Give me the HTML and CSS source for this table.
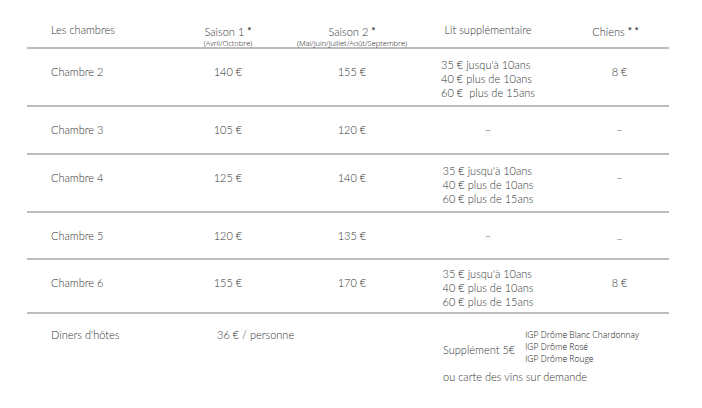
FILE: index.html
```html
<!DOCTYPE html>
<html lang="fr">
<head>
<meta charset="utf-8">
<title>Tarifs</title>
<link rel="stylesheet" href="styles.css">
</head>
<body>
<div class="table">
  <div class="row head">
    <div class="cell name">Les chambres</div>
    <div class="cell mid"><div>Saison 1 <span class="star">*</span></div><div class="sub">(Avril/Octobre)</div></div>
    <div class="cell mid"><div>Saison 2 <span class="star">*</span></div><div class="sub">(Mai/Juin/Juillet/Août/Septembre)</div></div>
    <div class="cell mid lit-h">Lit supplémentaire</div>
    <div class="cell mid dog">Chiens <span class="star">* *</span></div>
  </div>
  <div class="row tall">
    <div class="cell name">Chambre 2</div>
    <div class="cell mid">140 €</div>
    <div class="cell mid">155 €</div>
    <div class="cell mid lit"><div class="lit-list"><div>35 € jusqu'à 10ans</div><div>40 € plus de 10ans</div><div>60 €&nbsp; plus de 15ans</div></div></div>
    <div class="cell mid dog">8 €</div>
  </div>
  <div class="row short">
    <div class="cell name">Chambre 3</div>
    <div class="cell mid">105 €</div>
    <div class="cell mid">120 €</div>
    <div class="cell mid">–</div>
    <div class="cell mid dog">–</div>
  </div>
  <div class="row tall">
    <div class="cell name">Chambre 4</div>
    <div class="cell mid">125 €</div>
    <div class="cell mid">140 €</div>
    <div class="cell mid lit"><div class="lit-list"><div>35 € jusqu'à 10ans</div><div>40 € plus de 10ans</div><div>60 € plus de 15ans</div></div></div>
    <div class="cell mid dog">–</div>
  </div>
  <div class="row short5">
    <div class="cell name">Chambre 5</div>
    <div class="cell mid">120 €</div>
    <div class="cell mid">135 €</div>
    <div class="cell mid">–</div>
    <div class="cell mid dog low">_</div>
  </div>
  <div class="row mid6">
    <div class="cell name">Chambre 6</div>
    <div class="cell mid">155 €</div>
    <div class="cell mid">170 €</div>
    <div class="cell mid lit lit6"><div class="lit-list"><div>35 € jusqu'à 10ans</div><div>40 € plus de 10ans</div><div>60 € plus de 15ans</div></div></div>
    <div class="cell mid dog">8 €</div>
  </div>
  <div class="row foot">
    <div class="cell name">Dîners d'hôtes</div>
    <div class="cell meal">36 € / personne</div>
    <div class="cell wine">
      <div class="wine-row">
        <span class="supp">Supplément 5€</span>
        <div class="igp"><div>IGP Drôme Blanc Chardonnay</div><div>IGP Drôme Rosé</div><div>IGP Drôme Rouge</div></div>
      </div>
      <div class="carte">ou carte des vins sur demande</div>
    </div>
  </div>
</div>
</body>
</html>
```

FILE: styles.css
```css
html, body {
  margin: 0;
  padding: 0;
  background: #ffffff;
}
body {
  font-family: Lato, "Open Sans", sans-serif;
  font-weight: 300;
  font-size: 11px;
  line-height: 14px;
  color: #333333;
}
.table {
  margin-left: 27px;
  width: 642px;
}
.row {
  display: grid;
  grid-template-columns: 145px 112px 136px 136px 113px;
  box-sizing: border-box;
  border-bottom: 2px solid #bdbdbd;
}
.head { height: 49px; }
.tall { height: 58px; }
.short { height: 48px; }
.short5 { height: 47px; }
.mid6 { height: 54px; }
.foot { border-bottom: none; }

.cell {
  padding-top: 16px;
}
.head .cell { padding-top: 23px; }
.name { padding-left: 24px; }
.mid { text-align: center; }
.dog { padding-left: 14px; }
.head .dog { padding-left: 6px; }
.low { padding-top: 14px; }
.star {
  font-weight: 700;
  font-size: 10px;
  vertical-align: 2px;
}
.sub {
  font-family: "Open Sans", sans-serif;
  font-size: 7.5px;
  line-height: 9px;
  font-weight: 300;
  color: #111111;
}
.lit { padding-top: 9px; }
.lit6 { padding-top: 7px; }
.lit-list {
  display: inline-block;
  text-align: left;
}
.foot .cell { padding-top: 14px; }
.meal {
  grid-column: 2 / span 2;
  padding-left: 45px;
}
.wine {
  grid-column: 4 / span 2;
  padding-left: 23px;
}
.wine-row {
  display: flex;
  align-items: center;
  gap: 10px;
}
.igp {
  font-family: "Open Sans", sans-serif;
  font-size: 8.5px;
  line-height: 12px;
  font-weight: 300;
  color: #111111;
  margin-top: 1px;
}
.supp { padding-top: 6px; }
.carte { margin-top: 5px; }
```
